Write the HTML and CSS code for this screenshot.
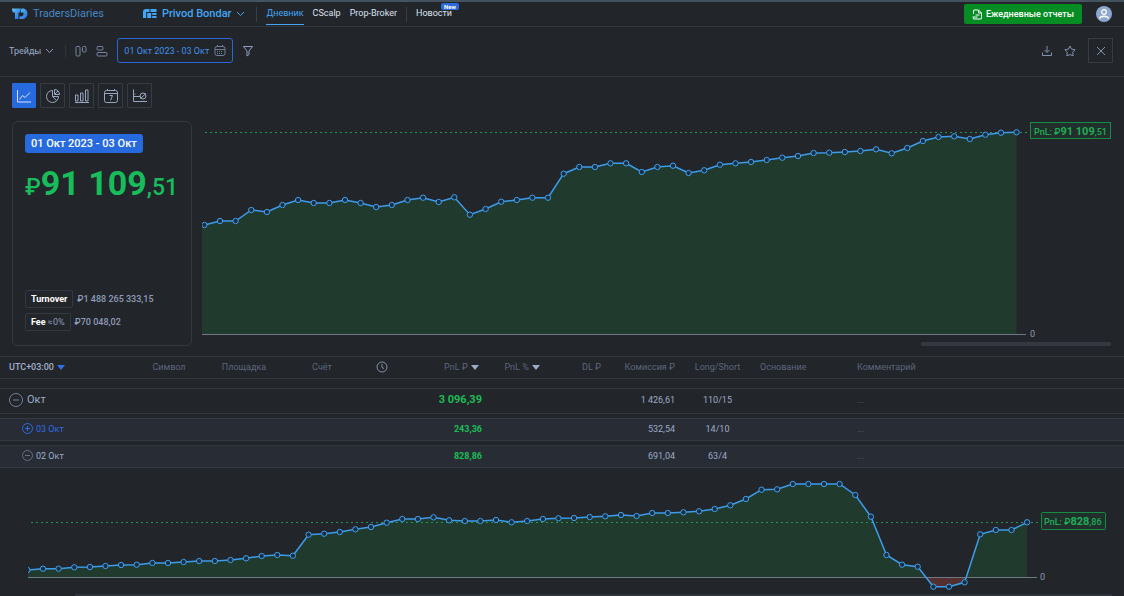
FILE: index.html
```html
<!DOCTYPE html>
<html lang="ru">
<head>
<meta charset="utf-8">
<title>TradersDiaries</title>
<link rel="stylesheet" href="styles.css">
</head>
<body>
<header class="topbar">
  <a class="brand" href="#">
    <svg class="brand-mark" width="16" height="12" viewBox="0 0 16 12"><defs><linearGradient id="mark" x1="0" y1="0" x2="1" y2="1"><stop offset="0" stop-color="#5cc4f5"/><stop offset="1" stop-color="#2767dc"/></linearGradient></defs><path fill="url(#mark)" d="M0 .5h9L8 4.500H6.500V11H3V4.500H1.500Q0 4 0 .5z"/><path fill="url(#mark)" d="M9.500 .5h1c3.500 0 5 2.500 5 5.250s-2 5.250-5 5.250H7.500V8.500c3 .3 4-1 4-2.500V4.500H8.700z"/></svg>
    <span>TradersDiaries</span>
  </a>
  <button class="account" type="button">
    <svg width="14" height="10" viewBox="0 0 14 10" fill="#43a5f5"><path d="M3 0h3.500v3H3.200v6H0V3q0-3 3-3zM7.500 0h6v3h-6zM4.200 4h4v5h-4zM9.200 4h4.300v2H9.200zM9.200 7h4.300v2H9.200z"/></svg>
    <span>Privod Bondar</span>
    <svg width="9" height="6" viewBox="0 0 9 6" fill="none" stroke="#43a5f5"><path d="M1 1l3.500 3.500L8 1"/></svg>
  </button>
  <nav class="menu">
    <a class="menu-link current" href="#">Дневник</a>
    <a class="menu-link" href="#">CScalp</a>
    <a class="menu-link" href="#">Prop-Broker</a>
    <span class="menu-split"></span>
    <a class="menu-link" href="#">Новости<span class="new-badge">New</span></a>
  </nav>
  <button class="reports" type="button">
    <svg width="11" height="11" viewBox="0 0 11 11" fill="none" stroke="#fff"><path d="M1.500 5V1.500Q1.500 1 2 1h4.500l3 3v5.500q0 .5-.5.5H1.500V8.500M6.500 1v3h3M3.500 6h4M.5 8h5"/></svg>
    Ежедневные отчеты
  </button>
  <button class="avatar" type="button" aria-label="Профиль">
    <svg width="16" height="16" viewBox="0 0 16 16"><circle cx="8" cy="8" r="8" fill="#8fa6cf"/><g fill="none" stroke="#fff" stroke-width="1.300"><circle cx="8" cy="6" r="2.300"/><path d="M3.500 12.500c1-3 8-3 9 0"/></g></svg>
  </button>
</header>

<section class="toolbar">
  <button class="trades" type="button">Трейды
    <svg width="9" height="6" viewBox="0 0 9 6" fill="none" stroke="#8b99b8"><path d="M1 1l3.500 3.500L8 1"/></svg>
  </button>
  <button class="tool" type="button" aria-label="Колонки"><svg width="12" height="12" viewBox="0 0 12 12" fill="none" stroke="#76849f"><rect x="1" y="1.500" width="4" height="9.500" rx="1"/><rect x="7.500" y="1.500" width="3.500" height="5.500" rx="1"/></svg></button>
  <button class="tool" type="button" aria-label="Строки"><svg width="12" height="12" viewBox="0 0 12 12" fill="none" stroke="#76849f"><rect x="1" y="1.500" width="6" height="3.500" rx="1"/><rect x="1" y="7.500" width="10" height="3.500" rx="1"/></svg></button>
  <button class="period" type="button">01 Окт 2023 - 03 Окт
    <svg width="12" height="11" viewBox="0 0 12 11" fill="none" stroke="#6f7d98"><rect x="1" y="1.500" width="10" height="9" rx="2"/><path d="M1 4.500h10M3.500 0v2M8.500 0v2"/><path d="M3 6.500h6M3 8.500h6" stroke-dasharray="1 1"/></svg>
  </button>
  <button class="tool" type="button" aria-label="Фильтр"><svg width="12" height="12" viewBox="0 0 12 12" fill="none" stroke="#8da0c2" stroke-linejoin="round"><path d="M1.500 1.500h9L7 6v3.500L5 11V6z"/></svg></button>
  <div class="tool-end">
    <button class="tool" type="button" aria-label="Скачать"><svg width="12" height="12" viewBox="0 0 12 12" fill="none" stroke="#8592ad"><path d="M6 1v6M3.500 5L6 7.500 8.500 5M1.500 7.500v3h9v-3"/></svg></button>
    <button class="tool" type="button" aria-label="В избранное"><svg width="12" height="12" viewBox="0 0 12 12" fill="none" stroke="#8592ad" stroke-linejoin="round"><path d="M6 1l1.600 3.200 3.500.5-2.400 2.500.5 3.600L6 9.600l-3.200 1.200.5-3.600L.9 4.700l3.500-.5z"/></svg></button>
    <button class="close" type="button" aria-label="Закрыть"><svg width="10" height="10" viewBox="0 0 10 10" stroke="#8592ad"><path d="M1 1l8 8M9 1L1 9"/></svg></button>
  </div>
</section>

<main>
  <div class="views">
    <button class="view chosen" type="button" aria-label="График"><svg width="16" height="16" viewBox="0 0 16 16" fill="none" stroke="#d5e2fa"><path d="M1.500 2v12H15M3.500 11.500l3-4 2.500 2L14 4.500"/></svg></button>
    <button class="view" type="button" aria-label="Доли"><svg width="16" height="16" viewBox="0 0 16 16" fill="none" stroke="#9aa7c2"><path d="M7.500 2.500a6 6 0 1 0 6 6h-6zM9.500 1.500v5h5a5 5 0 0 0-5-5zM7.500 8.500l4 4M10 6l3-3"/></svg></button>
    <button class="view" type="button" aria-label="Столбцы"><svg width="16" height="16" viewBox="0 0 16 16" fill="none" stroke="#9aa7c2"><path d="M1.500 7h2.500v6H1.500zM6.500 5H9v8H6.500zM11.500 2H14v11h-2.500zM1 14.500h14"/></svg></button>
    <button class="view" type="button" aria-label="Календарь"><svg width="16" height="16" viewBox="0 0 16 16" fill="none" stroke="#9aa7c2"><rect x="1.500" y="2.500" width="13" height="12" rx="2"/><path d="M1.500 5.500h13M4.500 1v2M11.500 1v2M6.500 7.500h3l-2 5"/></svg></button>
    <button class="view" type="button" aria-label="Без комиссии"><svg width="16" height="16" viewBox="0 0 16 16" fill="none" stroke="#9aa7c2"><path d="M1.500 1.500v12H15M2 8.500h6M3 5.500v1M8.500 10.500l5.500-5"/><circle cx="11" cy="8" r="3"/></svg></button>
  </div>

  <section class="overview">
    <div class="summary">
      <span class="range">01 Окт 2023 - 03 Окт</span>
      <p class="total"><small>₽</small>91 109<small>,51</small></p>
      <dl class="facts">
        <div class="fact"><dt>Turnover</dt><dd>₽1 488 265 333,15</dd></div>
        <div class="fact"><dt>Fee <span>≈0%</span></dt><dd>₽70 048,02</dd></div>
      </dl>
    </div>
    <div class="plot">
      <svg class="chart" id="period-chart" viewBox="0 0 922 220">
        <g class="lines"></g>
        <rect class="tag" x="828.500" y="2.500" width="80" height="16"/>
        <text class="tag-text" x="832" y="15">PnL: ₽<tspan class="tag-big">91 109</tspan>,51</text>
        <text class="zero-text" x="828" y="217">0</text>
      </svg>
      <div class="scroll"></div>
    </div>
  </section>

  <table class="trades-table">
    <colgroup><col class="w-date"><col class="w-symbol"><col class="w-venue"><col class="w-account"><col class="w-time"><col class="w-pnl"><col class="w-pct"><col class="w-dl"><col class="w-fee"><col class="w-side"><col class="w-reason"><col></colgroup>
    <thead>
      <tr>
        <th class="zone">UTC+03:00 <i class="caret blue"></i></th>
        <th class="mid">Символ</th><th class="mid">Площадка</th><th class="mid">Счёт</th>
        <th class="mid"><svg width="12" height="12" viewBox="0 0 12 12" fill="none" stroke="#8290ab"><circle cx="6" cy="6" r="5"/><path d="M6 3v3.500l2 1"/></svg></th>
        <th class="num">PnL ₽ <i class="caret"></i></th><th class="num">PnL % <i class="caret"></i></th><th class="num">DL ₽</th><th class="num">Комиссия ₽</th><th class="mid">Long/Short</th><th>Основание</th><th>Комментарий</th>
      </tr>
    </thead>
    <tbody>
      <tr class="spacer"><td colspan="12"></td></tr>
      <tr class="month">
        <td><button class="fold" type="button"><svg width="14" height="14" viewBox="0 0 14 14" fill="none" stroke="#778095"><circle cx="7" cy="7" r="6.500"/><path d="M4 7h6"/></svg>Окт</button></td>
        <td></td><td></td><td></td><td></td><td class="num gain">3 096,39</td><td></td><td></td><td class="num">1 426,61</td><td class="mid">110/15</td><td></td><td class="note">...</td>
      </tr>
      <tr class="day">
        <td><button class="fold open" type="button"><svg width="11" height="11" viewBox="0 0 11 11" fill="none" stroke="#2f6be0"><circle cx="5.500" cy="5.500" r="5"/><path d="M3 5.500h5M5.500 3v5"/></svg>03 Окт</button></td>
        <td></td><td></td><td></td><td></td><td class="num gain">243,36</td><td></td><td></td><td class="num">532,54</td><td class="mid">14/10</td><td></td><td class="note">...</td>
      </tr>
      <tr class="day">
        <td><button class="fold" type="button"><svg width="11" height="11" viewBox="0 0 11 11" fill="none" stroke="#667086"><circle cx="5.500" cy="5.500" r="5"/><path d="M3 5.500h5"/></svg>02 Окт</button></td>
        <td></td><td></td><td></td><td></td><td class="num gain">828,86</td><td></td><td></td><td class="num">691,04</td><td class="mid">63/4</td><td></td><td class="note">...</td>
      </tr>
    </tbody>
  </table>

  <svg class="chart" id="day-chart" viewBox="0 0 1124 122">
    <g class="lines"></g>
    <rect class="tag" x="1041.500" y="40.500" width="64" height="17" rx="1"/>
    <text class="tag-text" x="1044" y="53">PnL: ₽<tspan class="tag-big">828</tspan>,86</text>
    <text class="zero-text" x="1040" y="108">0</text>
  </svg>
  <div class="day-scroll"></div>
</main>
<script src="charts.js"></script>
</body>
</html>
```
FILE: styles.css
```css
* { box-sizing: border-box; }
body {
  margin: 0;
  background: #22252a;
  color: #9dabc8;
  font: 9px/12px Roboto, "Open Sans", sans-serif;
  overflow-x: hidden;
}
button {
  display: flex;
  align-items: center;
  margin: 0;
  padding: 0;
  border: 0;
  background: none;
  color: inherit;
  font: inherit;
}
a { color: inherit; text-decoration: none; }
svg { flex: none; }

.topbar {
  display: flex;
  align-items: center;
  height: 27px;
  padding: 0 12px 0 12px;
  border-top: 2px solid #45535f;
  border-bottom: 1px solid #32363d;
}
.brand {
  display: flex;
  align-items: center;
  gap: 5px;
  color: #4488c4;
  font-size: 11px;
}
.account {
  gap: 5px;
  margin-left: 39px;
  color: #43a5f5;
  font-size: 11px;
  font-weight: 500;
}
.menu {
  display: flex;
  align-items: center;
  gap: 9px;
  align-self: stretch;
  margin: 0 auto 0 11px;
}
.menu::before, .menu-split {
  content: "";
  width: 1px;
  height: 15px;
  background: #393e46;
}
.menu-link {
  position: relative;
  align-self: stretch;
  padding-top: 5px;
  color: #dce3f0;
  line-height: 13px;
}
.menu-link.current {
  margin-bottom: 1px;
  border-bottom: 1px solid #43a5f5;
  color: #43a5f5;
}
.new-badge {
  position: absolute;
  left: 25px;
  top: 1px;
  padding: 0 3px;
  border-radius: 2px;
  background: #2b6bd8;
  color: #fff;
  font-size: 6px;
  font-weight: 700;
  line-height: 7px;
}
.reports {
  gap: 3px;
  height: 20px;
  padding: 0 8px;
  border-radius: 2px;
  background: #058c23;
  color: #fff;
  font-weight: 500;
}
.avatar { margin-left: 14px; }

.toolbar {
  display: flex;
  align-items: center;
  height: 50px;
  padding: 0 11px 2px 9px;
  border-bottom: 1px solid #32363d;
}
.trades {
  gap: 4px;
  padding-right: 11px;
  border-right: 1px solid #32363d;
}
.tool { margin-left: 9px; }
.period {
  gap: 5px;
  height: 25px;
  margin-left: 9px;
  padding: 0 6px;
  border: 1px solid #2a67d2;
  border-radius: 3px;
  color: #3f93e8;
}
.tool-end {
  display: flex;
  align-items: center;
  margin-left: auto;
}
.tool-end .tool + .tool { margin-left: 11px; }
.close {
  justify-content: center;
  width: 25px;
  height: 25px;
  margin-left: 12px;
  border: 1px solid #363b44;
}

.views {
  display: flex;
  gap: 4px;
  padding: 6px 12px 12px;
}
.view {
  justify-content: center;
  width: 25px;
  height: 25px;
  border: 1px solid #363b44;
  border-radius: 1px;
}
.view.chosen { width: 24px; border-color: #266ade; background: #266ade; }

.overview {
  display: grid;
  grid-template-columns: 180px 1fr;
  gap: 10px;
  padding-left: 12px;
}
.summary {
  display: flex;
  flex-direction: column;
  align-items: flex-start;
  margin-top: 1px;
  padding: 12px 12px 14px;
  border: 1px solid #343840;
  border-radius: 6px;
}
.range {
  padding: 0 6px;
  border-radius: 3px;
  background: #266ade;
  color: #fff;
  font-size: 11px;
  font-weight: 500;
  line-height: 19px;
}
.total {
  margin: 10px 0 0;
  color: #18bd5b;
  font-size: 34px;
  font-weight: 700;
  line-height: 40px;
  white-space: nowrap;
}
.total small { font-size: 23px; font-weight: 500; }
.facts { margin: auto 0 0; }
.fact { display: flex; align-items: center; gap: 4px; }
.fact + .fact { margin-top: 5px; }
.fact dt {
  padding: 2px 5px;
  border: 1px solid #343840;
  border-radius: 2px;
  color: #fff;
  font-weight: 700;
}
.fact dt span { color: #8f9cb8; font-weight: 400; }
.fact dd { margin: 0; color: #8f9cb8; font-weight: 500; }

.chart { display: block; width: 100%; height: auto; }
.guide { stroke: #249455; stroke-dasharray: 2 3; }
.axis { stroke: #707985; }
.gain-area { fill: #203a2e; }
.loss-area { fill: #53302f; }
.curve { fill: none; stroke: #3d9cec; stroke-width: 1.5; }
.dot { fill: #182f45; stroke: #429fe9; }
.tag { fill: #21302c; stroke: #178a44; }
.tag-text { fill: #20ae57; font-size: 9px; font-weight: 500; }
.tag-big { font-size: 11px; font-weight: 700; }
.zero-text { fill: #9099aa; font-size: 9px; }
.scroll {
  width: 190px;
  height: 4px;
  margin: 2px 13px 0 auto;
  border-radius: 2px;
  background: #343840;
}

.trades-table {
  width: 100%;
  margin-top: 6px;
  table-layout: fixed;
  border-collapse: separate;
  border-spacing: 0 4px;
}
.w-date { width: 130px; }
.w-symbol { width: 78px; }
.w-venue { width: 72px; }
.w-account { width: 84px; }
.w-time { width: 36px; }
.w-pnl { width: 82px; }
.w-pct { width: 58px; }
.w-dl { width: 61px; }
.w-fee { width: 74px; }
.w-side { width: 85px; }
.w-reason { width: 97px; }
.trades-table th, .trades-table td {
  height: 23px;
  padding: 0 0 2px;
  border: solid #343941;
  border-width: 1px 0;
  text-align: left;
  vertical-align: middle;
  white-space: nowrap;
}
.trades-table th { color: #5c667c; font-weight: 400; }
.trades-table th svg { display: block; margin: 1px auto 0; }
.trades-table .zone { padding-left: 9px; color: #a3b0cc; font-weight: 500; }
.trades-table .mid { text-align: center; }
.trades-table .num { text-align: right; }
.trades-table th.num:has(.caret) { padding-right: 3px; }
.trades-table th.num:nth-child(7) { padding-right: 0; }
.caret {
  display: inline-block;
  margin-left: 1px;
  border: 4px solid transparent;
  border-top: 5px solid #9dabc8;
  border-bottom: 0;
}
.caret.blue { border-top-color: #2f73e8; }
.trades-table .spacer td { height: 1px; padding: 0; border: 0; }
.trades-table .month td { height: 26px; }
.trades-table .day td { background: #282c35; }
.fold { gap: 4px; margin-left: 9px; }
.month .fold { font-size: 11px; }
.day .fold { gap: 3px; margin-left: 22px; }
.fold.open { color: #2f6be0; }
.trades-table .gain { color: #1dbb54; font-weight: 700; }
.trades-table .month .gain { font-size: 11px; }
.trades-table .note { color: #5c667c; }
.day-scroll {
  height: 2px;
  margin: 0 12px 0 75px;
  background: #2e323b;
}
```
FILE: charts.js
```js
// Levels are measured down from the top of the plot, three units to a pixel.
const STEP = 15.62;
const charts = [
  {
    id: "period-chart", left: 2.4, clip: 0, top: 37, zero: 644, end: 824, tag: 828,
    levels: [315, 303, 303, 270, 276, 255, 240, 249, 249, 240, 249, 261, 255, 240, 233, 246, 232, 284, 267, 245,
      240, 233, 233, 161, 141, 141, 130, 130, 156, 141, 137, 159, 151, 134, 130, 126, 120, 113, 108, 99, 98, 96,
      93, 88, 100, 84, 63, 51, 49, 57, 44, 38, 37]
  },
  {
    id: "day-chart", left: 27.4, clip: 28, top: 151, zero: 316, end: 1037, tag: 1041,
    levels: [294, 290, 290, 286, 285, 282, 279, 278, 273, 273, 270, 267, 267, 264, 259, 252, 249, 251, 188, 185,
      180, 172, 165, 152, 141, 141, 136, 145, 147, 147, 144, 151, 147, 141, 139, 138, 135, 133, 129, 132, 123,
      123, 121, 118, 111, 100, 81, 53, 52, 36, 36, 36, 36, 69, 134, 249, 278, 284, 344, 344, 331, 187, 174, 174, 151]
  }
];

for (const c of charts) {
  const points = c.levels.map((v, i) => [(c.left + i * STEP).toFixed(1), (v / 3).toFixed(1)]);
  const path = points.map(p => p.join(",")).join(" ");
  const zero = Math.floor(c.zero / 3) + 0.5;
  const guide = Math.floor(c.top / 3) + 0.5;
  const last = points[points.length - 1][0];
  const area = `${c.clip},${zero} ${c.clip},${points[0][1]} ${path} ${last},${zero}`;
  document.querySelector(`#${c.id} .lines`).innerHTML = `
    <clipPath id="${c.id}-up"><rect x="${c.clip}" width="1200" height="${zero}"/></clipPath>
    <clipPath id="${c.id}-down"><rect x="${c.clip}" y="${zero}" width="1200" height="100"/></clipPath>
    <clipPath id="${c.id}-all"><rect x="${c.clip}" width="1200" height="300"/></clipPath>
    <polygon class="gain-area" points="${area}" clip-path="url(#${c.id}-up)"/>
    <polygon class="loss-area" points="${area}" clip-path="url(#${c.id}-down)"/>
    <path class="guide" d="M${c.clip + 3} ${guide}H${c.tag}"/>
    <path class="axis" d="M${c.clip} ${zero}H${c.end}"/>
    <g clip-path="url(#${c.id}-all)">
      <polyline class="curve" points="${path}"/>
      ${points.map(p => `<circle class="dot" cx="${p[0]}" cy="${p[1]}" r="2.7"/>`).join("")}
    </g>`;
}
```
